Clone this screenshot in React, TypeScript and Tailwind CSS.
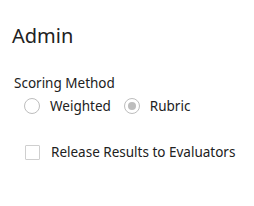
export default function App() {
  return (
    <div className="h-[206px] w-[254px] bg-white pl-3 pt-[22px] text-[#212121]" style={{ fontFamily: '"Noto Sans", "Open Sans", sans-serif' }}>
      <h2 className="text-[20px] leading-[28px]">Admin</h2>
      <div className="mt-[23px] pl-[2px] text-[13.5px] leading-[20px]">Scoring Method</div>
      <div className="mt-[3px] flex items-center pl-[12px] text-[13.5px] leading-[20px]">
        <span className="h-4 w-4 rounded-full border border-[#bdbdbd]" />
        <span className="ml-[10px]">Weighted</span>
        <span className="ml-[13px] flex h-4 w-4 items-center justify-center rounded-full border border-[#bdbdbd]">
          <span className="h-2 w-2 rounded-full bg-[#bdbdbd]" />
        </span>
        <span className="ml-[10px]">Rubric</span>
      </div>
      <div className="mt-[26px] flex items-center pl-[13px] text-[13.5px] leading-[20px]">
        <span className="h-[15px] w-[15px] rounded-[1px] border border-[#cfcfcf]" />
        <span className="ml-[11px]">Release Results to Evaluators</span>
      </div>
    </div>
  );
}
